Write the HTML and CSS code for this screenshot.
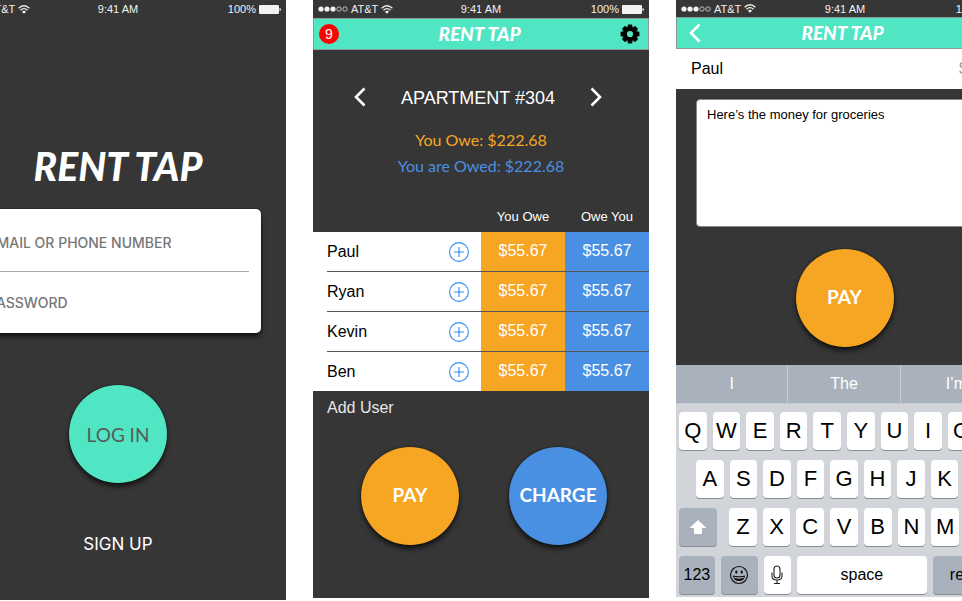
FILE: index.html
```html
<!DOCTYPE html>
<html lang="en">
<head>
<meta charset="utf-8">
<meta name="viewport" content="width=device-width, initial-scale=1">
<title>Rent Tap</title>
<link rel="stylesheet" href="styles.css">
</head>
<body>
<svg class="sprite" aria-hidden="true">
  <symbol id="dots" viewBox="0 0 30 6"><g fill="currentColor"><circle cx="3" cy="3" r="2.6"/><circle cx="9" cy="3" r="2.6"/><circle cx="15" cy="3" r="2.6"/></g><g fill="none" stroke="currentColor" stroke-width=".7"><circle cx="21" cy="3" r="2.2"/><circle cx="27" cy="3" r="2.2"/></g></symbol>
  <symbol id="wifi" viewBox="0 0 12 9"><g fill="none" stroke="currentColor" stroke-width="1.3"><path d="M.6 3.3Q6-1.7 11.4 3.3"/><path d="M2.5 5.3Q6 2 9.5 5.3"/></g><path d="M4 6.7Q6 5 8 6.7L6 8.8Z" fill="currentColor"/></symbol>
  <symbol id="battery" viewBox="0 0 22 9"><rect x="0" y="0" width="20" height="9" rx="1" fill="currentColor"/><path d="M20.5 3Q22 3.3 22 4.5T20.5 6Z" fill="currentColor"/></symbol>
  <symbol id="prev" viewBox="0 0 12 20"><path d="M10.500 1.500L2 10l8.500 8.500" fill="none" stroke="currentColor" stroke-width="2.600"/></symbol>
  <symbol id="next" viewBox="0 0 12 20"><path d="M1.500 1.500L10 10l-8.500 8.500" fill="none" stroke="currentColor" stroke-width="2.600"/></symbol>
  <symbol id="plus" viewBox="0 0 20 20"><g fill="none" stroke="currentColor" stroke-width="1.100"><circle cx="10" cy="10" r="9.400"/><path d="M10 5v10M5 10h10"/></g></symbol>
</svg>
<main class="board">

  <section class="phone phone-login">
    <div class="status">
      <span class="carrier"><svg class="i-dots"><use href="#dots"/></svg>AT&amp;T<svg class="i-wifi"><use href="#wifi"/></svg></span>
      <span>9:41 AM</span>
      <span class="power">100%<svg class="i-battery"><use href="#battery"/></svg></span>
    </div>
    <h1 class="brand brand-large">RENT TAP</h1>
    <form class="login">
      <div class="card">
        <input type="text" placeholder="EMAIL OR PHONE NUMBER" aria-label="Email or phone number">
        <input type="password" placeholder="PASSWORD" aria-label="Password">
      </div>
      <button type="button" class="round mint">LOG IN</button>
      <a class="signup" href="#">SIGN UP</a>
    </form>
  </section>

  <section class="phone">
    <div class="status">
      <span class="carrier"><svg class="i-dots"><use href="#dots"/></svg>AT&amp;T<svg class="i-wifi"><use href="#wifi"/></svg></span>
      <span>9:41 AM</span>
      <span class="power">100%<svg class="i-battery"><use href="#battery"/></svg></span>
    </div>
    <header class="bar">
      <button type="button" class="count" aria-label="9 notifications">9</button>
      <h2 class="brand">RENT TAP</h2>
      <button type="button" class="plain end" aria-label="Settings">
        <svg class="i-gear" viewBox="-10 -10 20 20"><g fill="currentColor"><rect x="-2.400" y="-9.400" width="4.800" height="18.800" rx="1.200"/><rect x="-2.400" y="-9.400" width="4.800" height="18.800" rx="1.200" transform="rotate(45)"/><rect x="-2.400" y="-9.400" width="4.800" height="18.800" rx="1.200" transform="rotate(90)"/><rect x="-2.400" y="-9.400" width="4.800" height="18.800" rx="1.200" transform="rotate(135)"/><circle r="7.200"/></g><circle r="3.100" fill="#50e5c3"/></svg>
      </button>
    </header>
    <div class="unit">
      <button type="button" class="plain" aria-label="Previous"><svg class="i-chevron"><use href="#prev"/></svg></button>
      <h3>APARTMENT #304</h3>
      <button type="button" class="plain" aria-label="Next"><svg class="i-chevron"><use href="#next"/></svg></button>
    </div>
    <div class="totals">
      <p class="owe">You Owe: $222.68</p>
      <p class="owed">You are Owed: $222.68</p>
    </div>
    <table class="ledger">
      <thead><tr><td></td><th>You Owe</th><th>Owe You</th></tr></thead>
      <tbody>
        <tr><th><div class="person">Paul<button type="button" class="plain" aria-label="Add for Paul"><svg class="i-plus"><use href="#plus"/></svg></button></div></th><td>$55.67</td><td>$55.67</td></tr>
        <tr><th><div class="person">Ryan<button type="button" class="plain" aria-label="Add for Ryan"><svg class="i-plus"><use href="#plus"/></svg></button></div></th><td>$55.67</td><td>$55.67</td></tr>
        <tr><th><div class="person">Kevin<button type="button" class="plain" aria-label="Add for Kevin"><svg class="i-plus"><use href="#plus"/></svg></button></div></th><td>$55.67</td><td>$55.67</td></tr>
        <tr><th><div class="person">Ben<button type="button" class="plain" aria-label="Add for Ben"><svg class="i-plus"><use href="#plus"/></svg></button></div></th><td>$55.67</td><td>$55.67</td></tr>
      </tbody>
    </table>
    <button type="button" class="add">Add User</button>
    <div class="actions">
      <button type="button" class="round orange">PAY</button>
      <button type="button" class="round blue">CHARGE</button>
    </div>
  </section>

  <section class="phone phone-pay">
    <div class="status">
      <span class="carrier"><svg class="i-dots"><use href="#dots"/></svg>AT&amp;T<svg class="i-wifi"><use href="#wifi"/></svg></span>
      <span>9:41 AM</span>
      <span class="power">100%<svg class="i-battery"><use href="#battery"/></svg></span>
    </div>
    <header class="bar">
      <button type="button" class="plain back" aria-label="Back"><svg class="i-chevron"><use href="#prev"/></svg></button>
      <h2 class="brand">RENT TAP</h2>
    </header>
    <div class="payee"><span>Paul</span><span class="amount">$0.00</span></div>
    <div class="compose">
      <textarea class="note" aria-label="Note">Here’s the money for groceries</textarea>
      <button type="button" class="round orange">PAY</button>
    </div>
    <div class="hints"><button type="button">I</button><button type="button">The</button><button type="button">I’m</button></div>
    <div class="keyboard">
      <div class="keys"><button type="button">Q</button><button type="button">W</button><button type="button">E</button><button type="button">R</button><button type="button">T</button><button type="button">Y</button><button type="button">U</button><button type="button">I</button><button type="button">O</button><button type="button">P</button></div>
      <div class="keys keys-home"><button type="button">A</button><button type="button">S</button><button type="button">D</button><button type="button">F</button><button type="button">G</button><button type="button">H</button><button type="button">J</button><button type="button">K</button><button type="button">L</button></div>
      <div class="keys keys-lower">
        <button type="button" class="dim" aria-label="Shift"><svg class="i-shift" viewBox="0 0 18 16"><path d="M9 1L17.500 9H13V14Q13 15 12 15H6Q5 15 5 14V9H.5Z" fill="#fff"/></svg></button>
        <div class="keys letters"><button type="button">Z</button><button type="button">X</button><button type="button">C</button><button type="button">V</button><button type="button">B</button><button type="button">N</button><button type="button">M</button></div>
        <button type="button" class="dim" aria-label="Delete"><svg class="i-shift" viewBox="0 0 18 16"><path d="M6 2H17V14H6L1 8ZM9 5l5 6M14 5l-5 6" fill="none" stroke="#000"/></svg></button>
      </div>
      <div class="keys keys-bottom">
        <button type="button" class="dim">123</button>
        <button type="button" class="dim" aria-label="Emoji"><svg class="i-face" viewBox="0 0 20 20"><circle cx="10" cy="10" r="8.500" fill="none" stroke="#111" stroke-width="1.200"/><ellipse cx="7.300" cy="7" rx="1.100" ry="1.700" fill="#111"/><ellipse cx="12.700" cy="7" rx="1.100" ry="1.700" fill="#111"/><path d="M3.800 10.500Q10 12 16.200 10.500Q15.300 16 10 16T3.800 10.500Z" fill="#111"/><path d="M5.200 11.900Q10 13 14.800 11.900L14.300 13Q10 13.800 5.700 13Z" fill="#fff"/></svg></button>
        <button type="button" aria-label="Dictate"><svg class="i-mic" viewBox="0 0 12 20"><g fill="none" stroke="#222" stroke-width="1.100"><rect x="3" y="1" width="6" height="12" rx="3"/><path d="M1 7.500V11Q1 15 6 15T11 11V7.500M6 15V18.500M3 18.500H9"/></g></svg></button>
        <button type="button">space</button>
        <button type="button" class="dim">return</button>
      </div>
    </div>
  </section>

</main>
</body>
</html>
```
FILE: styles.css
```css
* { box-sizing: border-box; }

body {
  margin: 0;
  background: #fff;
  color: #fff;
  font-family: "Liberation Sans", Arial, sans-serif;
  font-size: 16px;
  overflow-x: hidden;
}

h1, h2, h3, p { margin: 0; }
svg { display: block; }
button, input, textarea { font: inherit; color: inherit; border: 0; padding: 0; margin: 0; }
button { background: none; cursor: pointer; }
.sprite { display: none; }

/* The outer screens run past both window edges. */
.board {
  display: grid;
  grid-template-columns: repeat(3, 1fr);
  align-items: start;
  gap: 27px;
  margin: 0 -50px;
}

.phone { background: #363636; }

.status {
  display: grid;
  grid-template-columns: 1fr auto 1fr;
  align-items: center;
  height: 18px;
  padding: 0 5px;
  font-size: 11px;
  color: #f2f2f2;
}
.carrier, .power { display: flex; align-items: center; gap: 3px; }
.power { justify-content: flex-end; }
.i-dots { width: 30px; height: 6px; }
.i-wifi { width: 12px; height: 9px; }
.i-battery { width: 22px; height: 9px; }

.brand {
  font-family: Lato, sans-serif;
  font-weight: 900;
  font-style: italic;
  font-size: 19px;
  line-height: 24px;
  text-align: center;
}
.brand-large { font-size: 39px; line-height: 48px; }

.bar {
  display: grid;
  grid-template-columns: 1fr auto 1fr;
  align-items: center;
  height: 32px;
  padding: 0 8px 0 5px;
  background: #50e5c3;
  border: 1px solid #8c9a97;
}
.count {
  width: 20px;
  height: 20px;
  border-radius: 50%;
  background: #f00;
  font-size: 14px;
  line-height: 20px;
}
.plain { color: inherit; }
.end { justify-self: end; color: #000; }
.back { justify-self: start; margin-left: 7px; }
.i-gear { width: 20px; height: 20px; }
.i-chevron { width: 12px; height: 20px; }

.round {
  display: block;
  width: 98px;
  height: 98px;
  border-radius: 50%;
  font-family: Lato, sans-serif;
  font-size: 19px;
  font-weight: 700;
  padding-bottom: 4px;
  box-shadow: 0 4px 5px rgba(0, 0, 0, .6), 0 0 2px rgba(0, 0, 0, .7);
}
.mint { background: #50e5c3; color: #5a5a5a; font-weight: 400; padding: 0; }
.orange { background: #f6a623; }
.blue { background: #4a90e2; }

.phone-login { padding-bottom: 45px; }
.phone-login .brand { padding-top: 124px; box-sizing: content-box; }
.login { display: flex; flex-direction: column; align-items: center; padding: 19px 25px 0; }
.card {
  align-self: stretch;
  margin-bottom: 52px;
  padding: 0 12px;
  border-radius: 5px;
  background: #fff;
  box-shadow: 0 4px 5px rgba(0, 0, 0, .6), 0 0 2px rgba(0, 0, 0, .7);
}
.card input {
  display: block;
  width: 100%;
  height: 62px;
  padding: 4px 1px 0;
  background: none;
  color: #777;
  font-family: Inter, sans-serif;
  font-size: 14px;
  font-weight: 500;
}
.card input + input { border-top: 1px solid #aaa; padding-top: 0; }
.card input::placeholder { color: #777; opacity: 1; }
.signup {
  margin-top: 50px;
  color: #fff;
  font-family: Inter, sans-serif;
  font-size: 17px;
  line-height: 22px;
  text-decoration: none;
}

.unit {
  display: flex;
  justify-content: space-between;
  align-items: center;
  padding: 30px 47px 0 41px;
}
.unit h3 { padding-top: 3px; font-size: 18px; font-weight: 400; line-height: 30px; }
.totals {
  padding: 14px 0 30px;
  font-family: Lato, sans-serif;
  font-size: 16px;
  line-height: 26px;
  text-align: center;
}
.owe { color: #f6a623; }
.owed { color: #4a90e2; }

.ledger {
  width: 100%;
  table-layout: fixed;
  border-collapse: collapse;
  text-align: center;
}
.ledger th, .ledger td { width: 25%; padding: 0; font-weight: 400; }
.ledger th:first-child, .ledger td:first-child { width: 50%; }
.ledger thead { font-size: 13px; }
.ledger thead th { height: 22px; padding-bottom: 8px; }
.ledger tbody th { background: #fff; color: #000; }
.ledger tbody td { background: #f6a623; }
.ledger tbody td:last-child { background: #4a90e2; }
.ledger tbody tr + tr td { border-top: 1px solid #555; }
.person {
  display: flex;
  justify-content: space-between;
  align-items: center;
  height: 39px;
  margin-left: 14px;
  padding-right: 12px;
}
.ledger tbody tr + tr .person { height: 40px; border-top: 1px solid #555; }
.person .plain { color: #318cf0; }
.i-plus { width: 20px; height: 20px; }
.add { display: block; padding: 6px 14px 0; line-height: 22px; color: #e6e6e6; }
.actions { display: flex; gap: 50px; padding: 28px 0 53px 48px; }

.phone-pay .status { height: 17px; padding-right: 3px; }
.payee {
  display: flex;
  justify-content: space-between;
  align-items: center;
  height: 40px;
  padding: 0 13px 0 15px;
  background: #fff;
  color: #000;
}
.amount { color: #999; }
.compose { display: flex; flex-direction: column; align-items: center; padding: 10px 19px 18px 20px; }
.note {
  display: block;
  width: 100%;
  height: 128px;
  margin-bottom: 22px;
  padding: 7px 10px;
  border: 1px solid #888;
  border-radius: 4px;
  background: #fff;
  color: #000;
  font-size: 13px;
  line-height: 16px;
  resize: none;
}
.hints { display: grid; grid-template-columns: repeat(3, 1fr); gap: 1px; background: #c8cdd4; border-bottom: 1px solid #c8cdd4; }
.hints button { height: 38px; background: #a9b2bc; }

.keyboard { display: grid; gap: 10px; padding: 8px 3px 3px; background: #d1d5da; color: #000; }
.keys { display: grid; grid-auto-flow: column; grid-auto-columns: minmax(0, 1fr); gap: 6px; }
.keys button {
  display: grid;
  place-items: center;
  height: 38px;
  border-radius: 4px;
  background: #fff;
  box-shadow: 0 1px 0 #898c90;
  font-size: 22px;
}
.keys-home { padding: 0 17px; }
.keys-lower { grid-template-columns: 38fr 230fr 38fr; gap: 12px; }
.keys-bottom { grid-template-columns: 36fr 37fr 28fr 130fr 77fr; }
.keys .dim { background: #a9b2bc; }
.keys-bottom button { font-size: 16px; }
.i-shift { width: 18px; height: 16px; }
.i-face { width: 20px; height: 20px; }
.i-mic { width: 12px; height: 20px; }
```
